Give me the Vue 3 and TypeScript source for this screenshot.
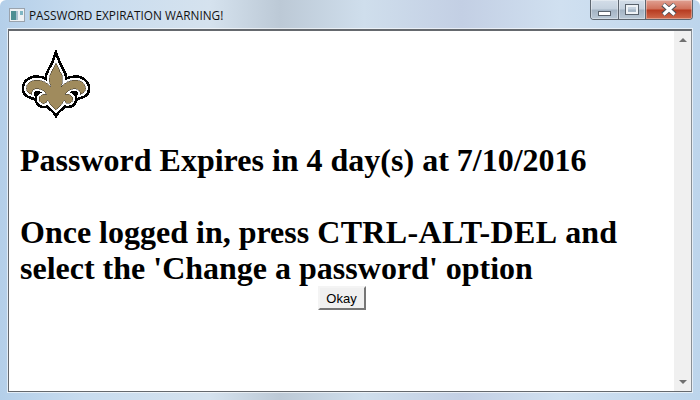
<script setup lang="ts">
// traced from the logo at 3x, so the viewBox is about 240x225
const fleur = 'M123 52 C128 66 140 80 143 95 C145 108 143 118 138 128 C150 114 166 106 184 106 C202 106 215 118 215 132 C215 141 208 148 198 151 C201 142 192 132 180 133 C167 133 156 141 152 151 C160 148 171 151 175 160 C178 169 171 178 161 179 C155 179 151 174 150 168 C145 172 142 178 139 184 C135 190 128 192 123 199 C118 192 111 190 107 184 C104 178 101 172 96 168 C95 174 91 179 85 179 C75 178 68 169 71 160 C75 151 86 148 94 151 C90 141 79 133 66 133 C54 132 45 142 48 151 C38 148 31 141 31 132 C31 118 44 106 62 106 C80 106 96 114 108 128 C103 118 101 108 103 95 C106 80 118 66 123 52 Z'
</script>

<template>
  <div class="window">
    <div class="titlebar">
      <svg class="app-icon" width="16" height="16" viewBox="0 0 16 16">
        <rect x="0.5" y="1.5" width="15" height="13" fill="#eef1f4" stroke="#9aa3ad" />
        <rect x="2" y="4" width="5" height="9" fill="#4f8f93" />
        <rect x="7" y="4" width="2" height="9" fill="#a9c0cf" />
        <rect x="11" y="4" width="3" height="4" fill="#7fb6c4" />
      </svg>
      <span class="title">PASSWORD EXPIRATION WARNING!</span>
      <div class="controls">
        <div class="ctl min"><i></i></div>
        <div class="ctl max"><i></i></div>
        <div class="ctl close">
          <svg width="18" height="13" viewBox="0 0 18 13">
            <path d="M3 1.5 L15 11.5 M15 1.5 L3 11.5" stroke="#4a4f55" stroke-width="5" />
            <path d="M3.5 1.5 L14.5 11.5 M14.5 1.5 L3.5 11.5" stroke="#fff" stroke-width="3.2" />
          </svg>
        </div>
      </div>
    </div>
    <div class="client">
      <div class="page">
        <svg class="logo" width="80" height="75" viewBox="-4 -3 248 233" shape-rendering="crispEdges">
          <path :d="fleur" fill="#000" stroke="#000" stroke-width="30" stroke-linejoin="miter" stroke-miterlimit="5" />
          <path :d="fleur" fill="#fff" stroke="#fff" stroke-width="14" stroke-linejoin="miter" stroke-miterlimit="5" />
          <path :d="fleur" fill="#a08b5d" stroke="#2a2620" stroke-width="1.5" />
        </svg>
        <h1>
          Password Expires in 4 day(s) at 7/10/2016<br /><br />
          Once logged in, press <span class="keys">CTRL-ALT-DEL</span> and<br />
          select the 'Change a password' option
        </h1>
        <div class="actions"><button type="button">Okay</button></div>
      </div>
      <div class="scrollbar">
        <span class="arrow up"></span>
        <span class="arrow down"></span>
      </div>
    </div>
  </div>
</template>

<style>
html, body {
  margin: 0;
  overflow: hidden;
}
</style>

<style scoped>
.window {
  width: 700px;
  height: 400px;
  box-sizing: border-box;
  padding: 0 8px 8px 8px;
  display: flex;
  flex-direction: column;
  background: linear-gradient(90deg, #b4cfe9 0%, #c8dcef 12%, #d5e2ee 30%, #bcc9d6 40%, #cfdeec 52%, #c3cfe4 66%, #d0e0f0 80%, #bdd5ec 100%);
  border-radius: 6px 6px 0 0;
}
.titlebar {
  height: 29px;
  flex: none;
  display: flex;
  align-items: flex-start;
}
.app-icon {
  margin: 7px 4px 0 1px;
}
.title {
  margin-top: 7px;
  font: 11.8px/16px "Open Sans", sans-serif;
  color: #111;
}
.controls {
  margin-left: auto;
  margin-right: -1px;
  display: flex;
  height: 19px;
  border: 1px solid #5d6670;
  border-top: none;
  border-radius: 0 0 4px 4px;
  overflow: hidden;
}
.ctl {
  display: flex;
  align-items: center;
  justify-content: center;
  box-sizing: border-box;
  background: linear-gradient(#d3dde8 0%, #c4d1de 48%, #a3b3c3 52%, #b9c8d6 100%);
  box-shadow: inset 0 0 0 1px rgba(255, 255, 255, 0.35);
}
.min {
  width: 28px;
  border-right: 1px solid #5d6670;
}
.min i {
  display: block;
  width: 11px;
  height: 3px;
  margin-top: 7px;
  background: #fff;
  border: 1px solid #59626c;
}
.max {
  width: 27px;
  border-right: 1px solid #5d6670;
}
.max i {
  display: block;
  width: 8px;
  height: 5px;
  border: 2px solid #eef2f6;
  outline: 1px solid #59626c;
}
.close {
  width: 46px;
  background: linear-gradient(#e0a193 0%, #d0705a 48%, #b73a20 52%, #cf6a4c 100%);
}
.client {
  flex: 1;
  min-height: 0;
  display: flex;
  background: #fff;
  border: 1px solid #65696e;
  border-top-width: 2px;
  border-right-color: #8a9096;
  box-shadow: 0 0 0 1px rgba(255, 255, 255, 0.6);
}
.page {
  flex: 1;
  min-width: 0;
  padding: 19px 11px 0;
}
.logo {
  display: block;
  margin: -5px 0 0 -5px;
}
h1 {
  margin: 22px 0 0;
  font: bold 32px/36px "Liberation Serif", serif;
  color: #000;
}
.keys {
  letter-spacing: 0.35px;
}
.actions {
  text-align: center;
}
button {
  width: 48px;
  height: 24px;
  padding: 0;
  display: inline-block;
  vertical-align: top;
  box-sizing: border-box;
  background: #f0f0f0;
  border: 2px solid;
  border-color: #f4f4f4 #767676 #767676 #f4f4f4;
  font: 13px "Liberation Sans", sans-serif;
  color: #000;
}
.scrollbar {
  width: 17px;
  flex: none;
  background: #f0f0f0;
  position: relative;
  display: flex;
  flex-direction: column;
  justify-content: space-between;
  align-items: center;
  padding: 7px 0;
  box-sizing: border-box;
}
.arrow {
  width: 0;
  height: 0;
  border-left: 4px solid transparent;
  border-right: 4px solid transparent;
}
.up {
  border-bottom: 4px solid #707070;
}
.down {
  border-top: 4px solid #707070;
}
</style>
